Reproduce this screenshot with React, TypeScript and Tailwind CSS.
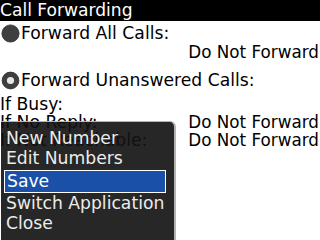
const font = { fontFamily: '"DejaVu Sans", sans-serif' };

const FilledRadio = () => (
  <svg width="19" height="19" viewBox="0 0 19 19" className="shrink-0">
    <circle cx="9.5" cy="9.5" r="8.6" fill="#3f3f3f" stroke="#2a2a2a" strokeWidth="0.8" />
  </svg>
);

const RingRadio = () => (
  <svg width="19" height="19" viewBox="0 0 19 19" className="shrink-0">
    <circle cx="9.5" cy="9.5" r="8.4" fill="#3f3f3f" stroke="#2a2a2a" strokeWidth="0.8" />
    <circle cx="9.5" cy="9.5" r="3.6" fill="#e6e6e6" />
  </svg>
);

export default function App() {
  const items = ["New Number", "Edit Numbers", "Save", "Switch Application", "Close"];

  return (
    <div
      className="relative w-[320px] h-[240px] overflow-hidden bg-white text-black text-[17.2px]"
      style={font}
    >
      {/* title bar */}
      <div className="h-[21px] bg-black text-white leading-[20px] pl-0 text-[17.1px]">
        Call Forwarding
      </div>

      <div className="mt-[3px] flex items-center gap-[1px] pl-[1px] leading-[19px]">
        <FilledRadio />
        <span>Forward All Calls:</span>
      </div>
      <div className="text-right pr-[1px] leading-[19px] text-[16.8px]">Do Not Forward</div>

      <div className="mt-[9px] flex items-center gap-[1px] pl-[1px] leading-[19px]">
        <RingRadio />
        <span>Forward Unanswered Calls:</span>
      </div>

      <div className="mt-[5px] grid grid-cols-[1fr_auto] leading-[18px]">
        <span>If Busy:</span>
        <span />
        <span>If No Reply:</span>
        <span className="pr-[1px] text-[16.8px]">Do Not Forward</span>
        <span>If Not Reachable:</span>
        <span className="pr-[1px] text-[16.8px]">Do Not Forward</span>
      </div>

      {/* popup menu */}
      <div className="absolute left-[1px] top-[121px] w-[175px] h-[130px] rounded-tr-[6px] border-t border-r-2 border-[#b4b4b4] bg-[rgba(18,18,18,0.91)] pt-[6px] text-[#ececec]">
        {items.map((label) =>
          label === "Save" ? (
            <div
              key={label}
              className="ml-[3px] mr-[8px] mt-[2px] border border-white bg-[#1a50a8] py-[1px] pl-[2px] leading-[19px] text-white"
            >
              {label}
            </div>
          ) : (
            <div key={label} className="pl-[5px] leading-[20px]">
              {label}
            </div>
          )
        )}
      </div>
    </div>
  );
}
